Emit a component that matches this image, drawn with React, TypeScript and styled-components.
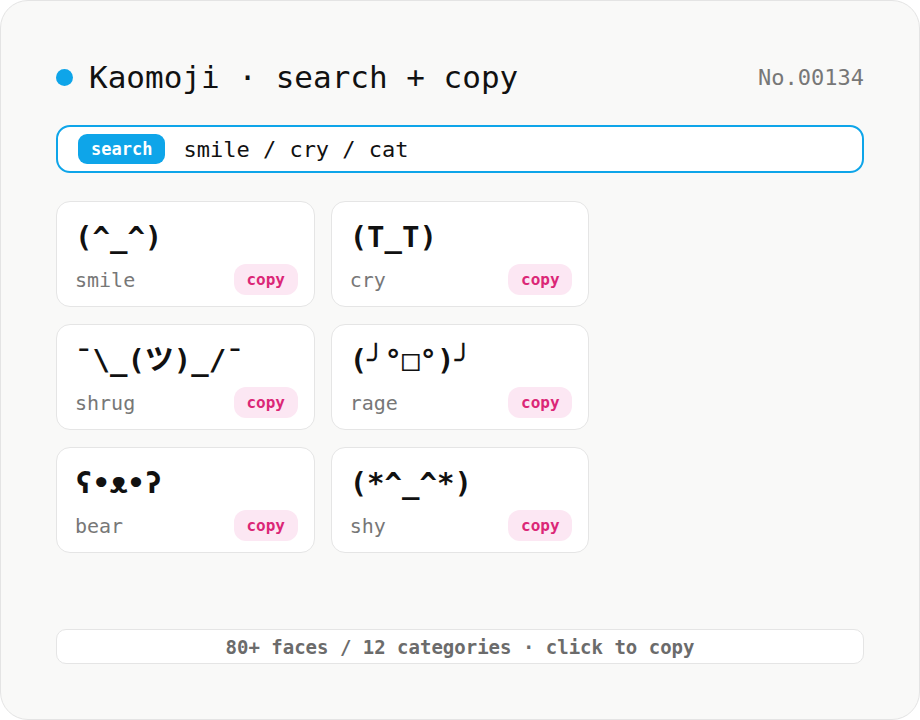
import React from "react";
import styled, { createGlobalStyle } from "styled-components";

type Face = { face: string; name: string };

const faces: Face[] = [
  { face: "(^_^)", name: "smile" },
  { face: "(T_T)", name: "cry" },
  { face: "¯\\_(ツ)_/¯", name: "shrug" },
  { face: "(╯°□°)╯", name: "rage" },
  { face: "ʕ•ᴥ•ʔ", name: "bear" },
  { face: "(*^_^*)", name: "shy" },
];

const MONO = `"DejaVu Sans Mono", "Liberation Mono", "Noto Sans CJK JP", monospace`;

const GlobalStyle = createGlobalStyle`
  html, body {
    margin: 0;
    padding: 0;
    background: #ffffff;
  }
  * {
    box-sizing: border-box;
  }
`;

const Shell = styled.div`
  width: 920px;
  height: 720px;
  display: flex;
  flex-direction: column;
  gap: 28px;
  padding: 56px 55px 55px;
  background: #f9f9f8;
  border: 1px solid #e4e4e4;
  border-radius: 28px;
  font-family: ${MONO};
  color: #111;
`;

const Header = styled.header`
  display: flex;
  align-items: center;
  height: 40px;
`;

const Dot = styled.span`
  width: 17px;
  height: 17px;
  border-radius: 50%;
  background: #0ea5e9;
  margin-right: 16px;
  flex-shrink: 0;
`;

const Title = styled.h1`
  margin: 0;
  font-size: 31px;
  font-weight: 400;
  flex: 1;
`;

const Serial = styled.span`
  font-size: 22px;
  color: #777;
`;

const SearchBox = styled.div`
  height: 48px;
  display: flex;
  align-items: center;
  gap: 18px;
  padding: 0 20px;
  background: #fff;
  border: 2px solid #0ea5e9;
  border-radius: 14px;
`;

const SearchTag = styled.span`
  height: 30px;
  padding: 0 13px;
  display: flex;
  align-items: center;
  background: #0ea5e9;
  color: #fff;
  border-radius: 9px;
  font-size: 17px;
  font-weight: 700;
`;

const Query = styled.span`
  font-size: 22px;
  color: #111;
`;

const Grid = styled.div`
  display: grid;
  grid-template-columns: repeat(2, calc((100% - 32px) / 3));
  column-gap: 16px;
  row-gap: 17px;
`;

const Card = styled.div`
  height: 106px;
  padding: 16px 16px 11px 18px;
  background: #fff;
  border: 1px solid #e5e5e5;
  border-radius: 14px;
  display: flex;
  flex-direction: column;
  justify-content: space-between;
`;

const FaceText = styled.div`
  font-size: 29px;
  font-weight: 700;
  line-height: 38px;
  white-space: nowrap;
`;

const Row = styled.div`
  display: flex;
  align-items: center;
  justify-content: space-between;
`;

const Label = styled.span`
  font-size: 20px;
  color: #777;
`;

const CopyButton = styled.button`
  height: 31px;
  width: 64px;
  border: none;
  border-radius: 12px;
  background: #fce7f3;
  color: #db2777;
  font-family: ${MONO};
  font-size: 16px;
  font-weight: 700;
  cursor: pointer;
  padding: 0;
`;

const Footer = styled.footer`
  margin-top: auto;
  height: 35px;
  display: flex;
  align-items: center;
  justify-content: center;
  background: #fff;
  border: 1px solid #e5e5e5;
  border-radius: 10px;
  font-size: 19px;
  font-weight: 700;
  color: #6b6b6b;
`;

export default function App() {
  return (
    <>
      <GlobalStyle />
      <Shell>
        <Header>
          <Dot />
          <Title>Kaomoji · search + copy</Title>
          <Serial>No.00134</Serial>
        </Header>
        <SearchBox>
          <SearchTag>search</SearchTag>
          <Query>smile / cry / cat</Query>
        </SearchBox>
        <Grid>
          {faces.map((f) => (
            <Card key={f.name}>
              <FaceText>{f.face}</FaceText>
              <Row>
                <Label>{f.name}</Label>
                <CopyButton>copy</CopyButton>
              </Row>
            </Card>
          ))}
        </Grid>
        <Footer>80+ faces / 12 categories · click to copy</Footer>
      </Shell>
    </>
  );
}
